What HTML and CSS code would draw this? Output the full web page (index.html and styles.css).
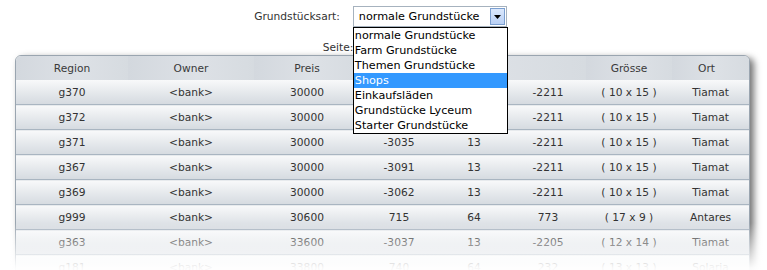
FILE: index.html
```html
<!DOCTYPE html>
<html lang="de">
<head>
<meta charset="utf-8">
<title>Grundstücke</title>
<link rel="stylesheet" href="styles.css">
</head>
<body>
<div class="page">
  <div class="filters">
    <div class="filter-row">
      <span class="label">Grundstücksart:</span>
      <div class="select">
        <span class="select-value">normale Grundstücke</span>
        <span class="select-btn"><svg width="7" height="4" viewBox="0 0 7 4"><path d="M0 0H7L3.5 4Z" fill="#000"/></svg></span>
        <ul class="dropdown">
          <li>normale Grundstücke</li>
          <li>Farm Grundstücke</li>
          <li>Themen Grundstücke</li>
          <li class="active">Shops</li>
          <li>Einkaufsläden</li>
          <li>Grundstücke Lyceum</li>
          <li>Starter Grundstücke</li>
        </ul>
      </div>
    </div>
    <div class="filter-row page-row">
      <span class="label">Seite:</span>
      <div class="select small"><span class="select-value">1</span></div>
    </div>
  </div>

  <div class="panel-wrap">
    <div class="panel">
      <table class="grid">
        <colgroup>
          <col class="c1"><col class="c2"><col class="c3"><col class="c4"><col class="c5"><col class="c6"><col class="c7"><col class="c8">
        </colgroup>
        <thead>
          <tr><th>Region</th><th>Owner</th><th>Preis</th><th colspan="3">Position</th><th>Grösse</th><th class="ort">Ort</th></tr>
        </thead>
        <tbody>
          <tr><td>g370</td><td>&lt;bank&gt;</td><td>30000</td><td>-3063</td><td>13</td><td>-2211</td><td>( 10 x 15 )</td><td>Tiamat</td></tr>
          <tr><td>g372</td><td>&lt;bank&gt;</td><td>30000</td><td>-3049</td><td>13</td><td>-2211</td><td>( 10 x 15 )</td><td>Tiamat</td></tr>
          <tr><td>g371</td><td>&lt;bank&gt;</td><td>30000</td><td>-3035</td><td>13</td><td>-2211</td><td>( 10 x 15 )</td><td>Tiamat</td></tr>
          <tr><td>g367</td><td>&lt;bank&gt;</td><td>30000</td><td>-3091</td><td>13</td><td>-2211</td><td>( 10 x 15 )</td><td>Tiamat</td></tr>
          <tr><td>g369</td><td>&lt;bank&gt;</td><td>30000</td><td>-3062</td><td>13</td><td>-2211</td><td>( 10 x 15 )</td><td>Tiamat</td></tr>
          <tr><td>g999</td><td>&lt;bank&gt;</td><td>30600</td><td>715</td><td>64</td><td>773</td><td>( 17 x 9 )</td><td>Antares</td></tr>
          <tr><td>g363</td><td>&lt;bank&gt;</td><td>33600</td><td>-3037</td><td>13</td><td>-2205</td><td>( 12 x 14 )</td><td>Tiamat</td></tr>
          <tr><td>g181</td><td>&lt;bank&gt;</td><td>33800</td><td>740</td><td>64</td><td>232</td><td>( 13 x 13 )</td><td>Solaria</td></tr>
        </tbody>
      </table>
    </div>
    <div class="fade"></div>
  </div>
</div>
</body>
</html>
```

FILE: styles.css
```css
html, body {
  margin: 0;
  padding: 0;
  height: 270px;
  overflow: hidden;
  background: #ffffff;
}

.page {
  font-family: "DejaVu Sans", Verdana, sans-serif;
  color: #333333;
}

.filters {
  display: flex;
  flex-direction: column;
  align-items: center;
  padding-top: 6px;
}

.filter-row {
  display: flex;
  align-items: center;
  justify-content: center;
  height: 21px;
  margin-right: 6px;
}

.label {
  font-size: 10.67px;
  color: #333333;
  margin-right: 13px;
}

.page-row {
  height: 16px;
  margin-top: 12px;
  margin-right: 0;
}

.page-row .label {
  margin-right: 3px;
}

.select {
  position: relative;
  display: flex;
  align-items: center;
  box-sizing: border-box;
  width: 154px;
  height: 21px;
  border: 1px solid #a6b2be;
  background: #ffffff;
}

.select.small {
  width: 88px;
  height: 18px;
}

.select-value {
  flex: 1;
  padding-left: 5px;
  font-size: 11.2px;
  color: #000000;
  white-space: nowrap;
}

.select-btn {
  display: flex;
  align-items: center;
  justify-content: center;
  box-sizing: border-box;
  width: 15px;
  height: 17px;
  margin-right: 1px;
  border: 1px solid #7b9fd0;
  background: linear-gradient(#dbe8fc, #b9d0f5);
}

.dropdown {
  position: absolute;
  top: 20px;
  left: -1px;
  z-index: 5;
  box-sizing: border-box;
  width: 155px;
  margin: 0;
  padding: 0;
  list-style: none;
  background: #ffffff;
  border: 1px solid #000000;
}

.dropdown li {
  height: 15px;
  line-height: 15px;
  padding-left: 1px;
  font-size: 11.2px;
  color: #000000;
  white-space: nowrap;
}

.dropdown li.active {
  background: #3399ff;
  color: #ffffff;
}

.panel-wrap {
  position: relative;
  margin-left: 15px;
  width: 735px;
}

.panel {
  box-sizing: border-box;
  width: 735px;
  border: 1px solid #9aa5b0;
  border-radius: 6px 6px 0 0;
  overflow: hidden;
  background: #ffffff;
  box-shadow: 4px 3px 7px rgba(0, 0, 0, 0.55);
}

.grid {
  width: 733px;
  table-layout: fixed;
  border-collapse: collapse;
  font-size: 10.67px;
}

.c1 { width: 112px; }
.c2 { width: 126px; }
.c3 { width: 106px; }
.c4 { width: 78px; }
.c5 { width: 72px; }
.c6 { width: 76px; }
.c7 { width: 86px; }
.c8 { width: 77px; }

.grid th {
  height: 24px;
  padding: 0;
  font-weight: normal;
  color: #3a3a3a;
  text-align: center;
  background: linear-gradient(90deg, #d3d8de 0%, #dde1e6 55%, #d6dbe0 100%);
}

.grid th.ort {
  padding-right: 8px;
}

.grid td {
  height: 24px;
  padding: 0;
  text-align: center;
  white-space: nowrap;
  color: #333333;
  border-bottom: 1px solid #a9b5c1;
  background: linear-gradient(#f8f9fa, #e8ebee 45%, #d5dae0);
}

.fade {
  position: absolute;
  left: -15px;
  right: -20px;
  top: 168px;
  height: 60px;
  background: linear-gradient(rgba(255, 255, 255, 0), rgba(255, 255, 255, 0.96) 75%, #ffffff);
}
```
